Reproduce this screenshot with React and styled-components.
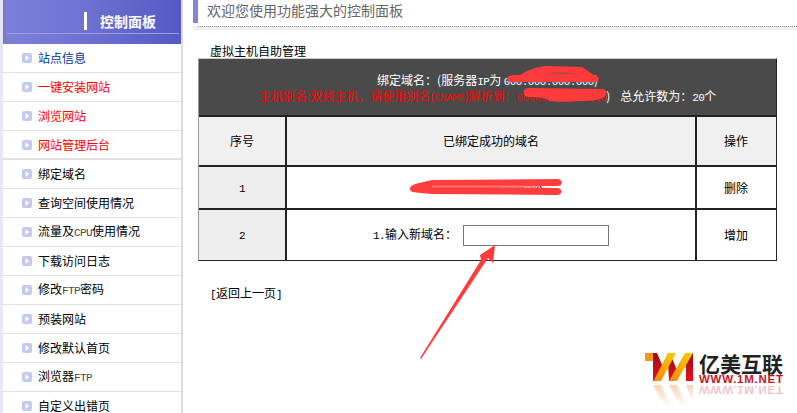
import React from "react";
import styled, { createGlobalStyle } from "styled-components";

const Global = createGlobalStyle`
  html, body { margin: 0; padding: 0; background: #fff; }
  body { font: 12px/1 "Noto Sans CJK SC", "Liberation Sans", sans-serif; color: #000; }
`;

const Page = styled.div`
  position: relative;
  display: flex;
  width: 797px;
  height: 413px;
  overflow: hidden;
  background: #fff;
`;

const Sidebar = styled.aside`
  flex: none;
  width: 183px;
  height: 413px;
  box-sizing: border-box;
  border-left: 3px solid #e6e6f6;
  border-right: 2px solid #dcdcdc;
  overflow: hidden;
`;

const Brand = styled.div`
  height: 44px;
  margin-right: -2px;
  margin-left: -3px;
  box-sizing: border-box;
  padding: 12px 4px 0 7px;
  background: linear-gradient(90deg, #6e71c8 0, #7c80d8 4%, #6d70d0 50%, #5458c4 100%);
`;

const BrandRow = styled.div`
  display: flex;
  align-items: center;
  justify-content: flex-start;
  height: 21px;
  padding-left: 77px;
  border-bottom: 1px solid #9a9de4;
`;

const BrandMark = styled.span`
  width: 3px;
  height: 18px;
  margin-bottom: 3px;
  background: #fff;
`;

const BrandTitle = styled.h1`
  margin: 0 0 3px 13px;
  font-size: 14px;
  font-weight: 700;
  line-height: 18px;
  color: #fff;
`;

const Menu = styled.ul`
  list-style: none;
  margin: 0;
  padding: 0;
`;

const MenuItem = styled.li`
  display: flex;
  align-items: center;
  gap: 6px;
  height: 29px;
  box-sizing: border-box;
  padding-left: 19px;
  border-bottom: ${(p) => (p.$thick ? "2px solid #e2e2e2" : "1px solid #e2e2e2")};
  color: ${(p) => p.$color || "#000"};
  white-space: nowrap;
`;

const Latin = styled.span`
  font-family: "Liberation Mono", monospace;
  font-size: 11px;
  letter-spacing: -0.6px;
  color: ${(p) => p.$color || "inherit"};
`;

const Main = styled.main`
  flex: 1;
  min-width: 0;
  padding: 0 0 0 10px;
`;

const Welcome = styled.div`
  display: flex;
  height: 30px;
  background: linear-gradient(#fff 0 26px, #efefef 26px);
`;

const WelcomeBar = styled.span`
  width: 5px;
  height: 23px;
  background: #8285da;
`;

const WelcomeText = styled.div`
  flex: 1;
  height: 27px;
  box-sizing: border-box;
  padding: 0 0 0 9px;
  border-bottom: 1px dotted #888;
  font-size: 14px;
  line-height: 20px;
  color: #666;
`;

const Section = styled.section`
  padding-left: 5px;
`;

const SectionTitle = styled.h2`
  margin: 0;
  padding: 14px 0 0 12px;
  height: 14px;
  font-size: 12px;
  font-weight: 400;
  line-height: 14px;
`;

const Table = styled.table`
  width: 579px;
  table-layout: fixed;
  border-collapse: separate;
  border-spacing: 0;
  border-left: 1px solid #999;
  border-right: 1px solid #222;
  border-top: 1px solid #ccc;
  border-bottom: 1px solid #222;
`;

const HeadCell = styled.th`
  height: 56px;
  box-sizing: content-box;
  padding: 3px 0 0;
  height: 53px;
  background: #4a4a4a;
  border-bottom: 2px solid #222;
  font-weight: 400;
  color: #fff;
  line-height: 13px;
  white-space: nowrap;
`;

const Red = styled.span`
  color: #f00;
`;

const Gap = styled.span`
  margin-left: 10px;
`;

const Cell = styled.td`
  height: ${(p) => p.$h}px;
  padding: 0 ${(p) => (p.$last ? "1px" : "0")} 0 0;
  box-sizing: border-box;
  text-align: center;
  background: ${(p) => p.$bg || "#fff"};
  border-right: ${(p) => (p.$last ? "0" : "2px solid #222")};
  border-bottom: ${(p) => (p.$end ? "0" : "2px solid #222")};
`;

const AddRow = styled.div`
  display: flex;
  align-items: center;
  justify-content: center;
  gap: 6px;
`;

const DomainInput = styled.input`
  width: 146px;
  height: 21px;
  box-sizing: border-box;
  border: 1px solid #777;
  padding: 0;
  background: #fff;
`;

const BackLink = styled.a`
  display: block;
  margin: 25px 0 0 12px;
  color: #000;
  text-decoration: none;
  line-height: 14px;
`;

const Annotations = styled.svg`
  position: absolute;
  inset: 0;
  pointer-events: none;
`;

const Logo = styled.div`
  position: absolute;
  left: 645px;
  top: 353px;
  display: flex;
  gap: 6px;
`;

const LogoWords = styled.div`
  display: flex;
  flex-direction: column;
  width: 86px;
`;

const LogoName = styled.div`
  font-size: 21px;
  font-weight: 700;
  line-height: 21px;
  color: #222;
  white-space: nowrap;
`;

const LogoUrl = styled.div`
  font-family: "Liberation Sans", sans-serif;
  font-size: 11.5px;
  font-weight: 700;
  line-height: 8px;
  margin-top: 1px;
  color: #c8141c;
  letter-spacing: 0.75px;
  white-space: nowrap;
`;

const LogoEcho = styled(LogoUrl)`
  margin-top: 3px;
  transform: scaleY(-1);
  opacity: 0.25;
`;

const Bullet = () => (
  <svg width="10" height="10" viewBox="0 0 10 10" style={{ flex: "none" }}>
    <rect width="10" height="10" rx="2" fill="#c6c9ef" />
    <path d="M3.5 2.2 7.4 5 3.5 7.8Z" fill="#fff" />
  </svg>
);

const LogoMark = () => (
  <svg width="48" height="57" viewBox="0 0 48 57" style={{ flex: "none" }}>
    <defs>
      <linearGradient id="yl" x1="0" y1="1" x2="1" y2="0">
        <stop offset="0" stopColor="#f08a10" />
        <stop offset="1" stopColor="#ffcc00" />
      </linearGradient>
      <linearGradient id="rd" x1="0" y1="0" x2="0" y2="1">
        <stop offset="0" stopColor="#9c0c14" />
        <stop offset="1" stopColor="#e8101c" />
      </linearGradient>
      <linearGradient id="fade" x1="0" y1="0" x2="0" y2="1">
        <stop offset="0" stopColor="#f0a060" stopOpacity="0.45" />
        <stop offset="1" stopColor="#f0a060" stopOpacity="0" />
      </linearGradient>
    </defs>
    <path d="M0 0H8V8H0Z" fill="#f7941d" />
    <path d="M8 0H12L18 14 10 28H8Z" fill="url(#rd)" />
    <path d="M23 9 27 5 33 20 29 28H24Z" fill="url(#rd)" />
    <path d="M8.5 28 23 0H31L16 28Z" fill="url(#yl)" />
    <path d="M24 28 40 0H48L32 28Z" fill="url(#yl)" />
    <path d="M41 12 48 0V28H41Z" fill="url(#rd)" />
    <path d="M8 32H16L26 54H20Z" fill="url(#fade)" />
    <path d="M24 32H32L42 54H36Z" fill="url(#fade)" />
    <path d="M41 32H48V50Z" fill="url(#fade)" />
  </svg>
);

const topItems = [
  { label: "站点信息", color: "#003399" },
  { label: "一键安装网站", color: "#f00" },
  { label: "浏览网站", color: "#f00" },
  { label: "网站管理后台", color: "#f00", thick: true },
];

const bottomItems = [
  ["绑定域名"],
  ["查询空间使用情况"],
  ["流量及", "CPU", "使用情况"],
  ["下载访问日志"],
  ["修改", "FTP", "密码"],
  ["预装网站"],
  ["修改默认首页"],
  ["浏览器", "FTP"],
  ["自定义出错页"],
];

export default function App() {
  return (
    <Page>
      <Global />
      <Sidebar>
        <Brand>
          <BrandRow>
            <BrandMark />
            <BrandTitle>控制面板</BrandTitle>
          </BrandRow>
        </Brand>
        <Menu>
          {topItems.map((it) => (
            <MenuItem key={it.label} $color={it.color} $thick={it.thick}>
              <Bullet />
              <span>{it.label}</span>
            </MenuItem>
          ))}
          {bottomItems.map((parts) => (
            <MenuItem key={parts.join("")}>
              <Bullet />
              <span>
                {parts[0]}
                {parts[1] && <Latin $color="#4a4a3a">{parts[1]}</Latin>}
                {parts[2]}
              </span>
            </MenuItem>
          ))}
        </Menu>
      </Sidebar>
      <Main>
        <Welcome>
          <WelcomeBar />
          <WelcomeText>欢迎您使用功能强大的控制面板</WelcomeText>
        </Welcome>
        <Section>
          <SectionTitle>虚拟主机自助管理</SectionTitle>
          <Table>
            <colgroup>
              <col style={{ width: 88 }} />
              <col style={{ width: 410 }} />
              <col style={{ width: 79 }} />
            </colgroup>
            <thead>
              <tr>
                <HeadCell colSpan={3}>
                  <div>
                    绑定域名：(服务器<Latin>IP</Latin>为 <Latin>000.000.000.000</Latin>)
                  </div>
                  <div>
                    <Red>
                      主机别名:双线主机，请使用别名(<Latin>CNAME</Latin>)解析到：<Latin>000000000000000</Latin>
                    </Red>
                    )<Gap>总允许数为：</Gap><Latin>20</Latin>个
                  </div>
                </HeadCell>
              </tr>
            </thead>
            <tbody>
              <tr>
                <Cell $h={50} $bg="#f0f0f0">序号</Cell>
                <Cell $h={50} $bg="#f0f0f0">已绑定成功的域名</Cell>
                <Cell $h={50} $bg="#f0f0f0" $last>操作</Cell>
              </tr>
              <tr>
                <Cell $h={43} $bg="#eeeeee"><Latin>1</Latin></Cell>
                <Cell $h={43}><Latin>www.example.com.cn.</Latin></Cell>
                <Cell $h={43} $last>删除</Cell>
              </tr>
              <tr>
                <Cell $h={50} $bg="#eeeeee" $end><Latin>2</Latin></Cell>
                <Cell $h={50} $end>
                  <AddRow>
                    <span><Latin>1.</Latin>输入新域名：</span>
                    <DomainInput />
                  </AddRow>
                </Cell>
                <Cell $h={50} $end $last>增加</Cell>
              </tr>
            </tbody>
          </Table>
          <BackLink href="#"><Latin>[</Latin>返回上一页<Latin>]</Latin></BackLink>
        </Section>
      </Main>

      <Annotations width="797" height="413" viewBox="0 0 797 413">
        <path
          d="M507 79C507 75 512 75 520 75 528 70 538 66 548 66L582 67C587 70 592 75 597 76 600 78 599 82 595 82H512C508 82 507 81 507 79Z"
          fill="#ff3a3a"
        />
        <path d="M545 73.5C555 72 568 72 575 73.5 565 74.5 553 74.5 545 73.5Z" fill="#a84a4a" />
        <path
          d="M524 91C524 89 526 88 530 88L602 89C608 90 607 95 604 97 600 100 590 101 580 101 570 102 556 102 549 101 548 98 540 97 530 97 525 97 523 94 524 91Z"
          fill="#ff3a3a"
        />
        <path d="M413 185C417 183 425 182 432 180L558 179C563 180 563 185 558 186L432 186 558 188C563 189 562 195 557 195L432 194C424 193 417 193 413 192 409 191 409 187 413 185Z" fill="#ff3d3d" />
        <path d="M432 186.5H540" stroke="#ff8080" strokeWidth="1.5" />
        <path d="M495 245 493 263 488 258 421 359 420 358 481 260 480 255Z" fill="#ff3b3b" />
      </Annotations>

      <Logo>
        <LogoMark />
        <LogoWords>
          <LogoName>亿美互联</LogoName>
          <LogoUrl>WWW.1M.NET</LogoUrl>
          <LogoEcho>WWW.1M.NET</LogoEcho>
        </LogoWords>
      </Logo>
    </Page>
  );
}
